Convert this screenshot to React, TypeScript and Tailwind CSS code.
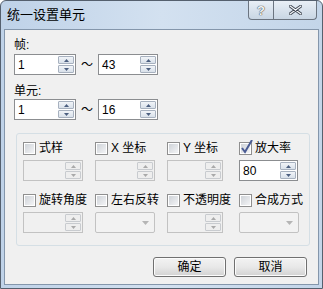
import React from 'react';

const font = 'font-["Liberation_Sans","Noto_Sans_CJK_SC",sans-serif]';

const Arrow: React.FC<{ up?: boolean; disabled?: boolean }> = ({ up, disabled }) => (
    <svg width="5" height="3" viewBox="0 0 5 3">
        <path d={up ? 'M2.5 0L5 3H0z' : 'M0 0h5L2.5 3z'} fill={disabled ? '#a9a9a9' : '#4c5f80'} />
    </svg>
);

const SpinBtn: React.FC<{ up?: boolean; disabled?: boolean }> = ({ up, disabled }) => (
    <div
        className={
            disabled
                ? 'flex flex-1 items-center justify-center rounded-[1px] border border-[#c8cbcf] bg-[#eeeeee]'
                : 'flex flex-1 items-center justify-center rounded-[1px] border border-[#a7b1bf] bg-gradient-to-b from-[#f1f4f8] to-[#d9e1ea]'
        }
    >
        <Arrow up={up} disabled={disabled} />
    </div>
);

const Spin: React.FC<{ value?: string; disabled?: boolean; className?: string }> = ({ value, disabled, className }) => (
    <div
        className={`flex h-[21px] items-stretch border ${disabled ? 'border-[#c2c2c2] bg-[#f0f0f0]' : 'border-[#8b8d90] bg-white'} ${className ?? ''}`}
    >
        <span className="flex flex-1 items-center pl-[3px] text-[12px] leading-none text-black">{value}</span>
        <div className="flex w-[17px] flex-col gap-[1px] py-[1px] pr-[1px]">
            <SpinBtn up disabled={disabled} />
            <SpinBtn disabled={disabled} />
        </div>
    </div>
);

const Combo: React.FC = () => (
    <div className="flex h-[21px] w-[60px] items-center justify-end rounded-[2px] border border-[#c2c2c2] bg-[#f2f2f2] pr-[5px]">
        <svg width="7" height="4" viewBox="0 0 7 4">
            <path d="M0 0h7L3.5 4z" fill="#b5b5b5" />
        </svg>
    </div>
);

const Check: React.FC<{ label: string; checked?: boolean }> = ({ label, checked }) => (
    <div className="flex h-[14px] items-center gap-[3px]">
        <div className="relative flex h-[13px] w-[13px] items-center justify-center border border-[#8f8f8f] bg-white p-[1px]">
            <div className="h-full w-full bg-gradient-to-br from-[#cfd3d8] to-[#f3f4f6]" />
            {checked && (
                <svg className="absolute -top-[3px] left-[1px]" width="12" height="14" viewBox="0 0 12 14">
                    <path d="M1 8l3 4 7-12" fill="none" stroke="#4a5c94" strokeWidth="2" />
                </svg>
            )}
        </div>
        <span className="text-[12px] leading-[14px] text-black">{label}</span>
    </div>
);

const Button: React.FC<{ label: string }> = ({ label }) => (
    <button className="flex h-[20px] w-[73px] items-center justify-center rounded-[3px] border border-[#707070] bg-gradient-to-b from-[#f3f3f3] via-[#e8e8e8] to-[#d2d2d2] text-[12px] text-black shadow-[inset_0_0_0_1px_#fcfcfc]">
        {label}
    </button>
);

export default function App() {
    return (
        <div className={`h-[289px] w-[323px] bg-white ${font}`}>
            <div className="flex h-full w-full flex-col rounded-t-[6px] border border-[#55606e] bg-gradient-to-r from-[#bfd2e8] via-[#d3e1f0] to-[#c3d5e9] px-[3px] pb-[3px]">
                <div className="flex h-[28px] items-start justify-between">
                    <span className="pl-[3px] pt-[6px] text-[13px] leading-[16px] text-black">统一设置单元</span>
                    <div className="mr-[2px] flex h-[19px]">
                        <div className="flex w-[26px] items-center justify-center rounded-bl-[4px] border border-t-0 border-[#6b7480] bg-gradient-to-b from-[#e9eff6] to-[#c9d6e4] text-[13px] font-bold leading-none text-[#f4f6f9] [text-shadow:0_0_1px_#333,0_0_1px_#333]">
                            ?
                        </div>
                        <div className="flex w-[43px] items-center justify-center rounded-br-[4px] border border-l-0 border-t-0 border-[#6b7480] bg-gradient-to-b from-[#e9eff6] to-[#c9d6e4]">
                            <svg width="13" height="10" viewBox="0 0 13 10">
                                <path d="M1 1l11 8M12 1L1 9" stroke="#3d4450" strokeWidth="3" strokeLinecap="round" />
                                <path d="M1 1l11 8M12 1L1 9" stroke="#f4f6f9" strokeWidth="1.2" strokeLinecap="round" />
                            </svg>
                        </div>
                    </div>
                </div>
                <div className="flex flex-1 flex-col border border-[#8496ab] bg-[#f0f0f0] px-[9px] pt-[8px]">
                    <span className="text-[12px] leading-[14px] text-black">帧:</span>
                    <div className="mt-[2px] flex items-center">
                        <Spin value="1" className="w-[62px]" />
                        <span className="w-[22px] text-center text-[12px] text-black">～</span>
                        <Spin value="43" className="w-[60px]" />
                    </div>
                    <span className="mt-[9px] text-[12px] leading-[14px] text-black">单元:</span>
                    <div className="mt-[1px] flex items-center">
                        <Spin value="1" className="w-[62px]" />
                        <span className="w-[22px] text-center text-[12px] text-black">～</span>
                        <Spin value="16" className="w-[60px]" />
                    </div>

                    <div className="ml-[2px] mt-[13px] w-[294px] rounded-[3px] border border-[#d5dfe5] pb-[12px] pl-[6px] pt-[7px]">
                        <div className="grid grid-cols-[72px_72px_72px_72px]">
                            <Check label="式样" />
                            <Check label="X 坐标" />
                            <Check label="Y 坐标" />
                            <Check label="放大率" checked />
                        </div>
                        <div className="mt-[5px] grid grid-cols-[72px_72px_72px_72px]">
                            <Spin disabled className="w-[60px]" />
                            <Spin disabled className="w-[60px]" />
                            <Spin disabled className="w-[56px]" />
                            <Spin value="80" className="w-[59px]" />
                        </div>
                        <div className="mt-[12px] grid grid-cols-[72px_72px_72px_72px]">
                            <Check label="旋转角度" />
                            <Check label="左右反转" />
                            <Check label="不透明度" />
                            <Check label="合成方式" />
                        </div>
                        <div className="mt-[5px] grid grid-cols-[72px_72px_72px_72px]">
                            <Spin disabled className="w-[60px]" />
                            <Combo />
                            <Spin disabled className="w-[56px]" />
                            <Combo />
                        </div>
                    </div>

                    <div className="mr-[2px] mt-[11px] flex justify-end gap-[8px]">
                        <Button label="确定" />
                        <Button label="取消" />
                    </div>
                </div>
            </div>
        </div>
    );
}
